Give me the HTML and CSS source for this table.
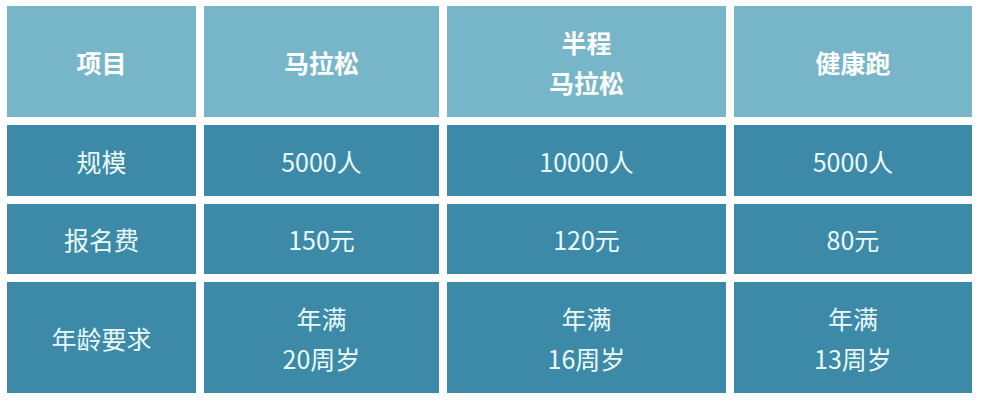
FILE: index.html
```html
<!DOCTYPE html>
<html lang="zh-CN">
<head>
<meta charset="utf-8">
<link rel="stylesheet" href="styles.css">
</head>
<body>
<div class="table">
  <div class="cell head">项目</div>
  <div class="cell head">马拉松</div>
  <div class="cell head">半程<br>马拉松</div>
  <div class="cell head">健康跑</div>

  <div class="cell">规模</div>
  <div class="cell">5000人</div>
  <div class="cell">10000人</div>
  <div class="cell">5000人</div>

  <div class="cell">报名费</div>
  <div class="cell">150元</div>
  <div class="cell">120元</div>
  <div class="cell">80元</div>

  <div class="cell">年龄要求</div>
  <div class="cell">年满<br>20周岁</div>
  <div class="cell">年满<br>16周岁</div>
  <div class="cell">年满<br>13周岁</div>
</div>
</body>
</html>
```

FILE: styles.css
```css
html, body {
  margin: 0;
  padding: 0;
  background: #ffffff;
}
.table {
  display: grid;
  grid-template-columns: 189px 235px 279px 238px;
  grid-template-rows: 111px 71px 70px 111px;
  gap: 8px;
  padding: 6px 0 0 7px;
  font-family: "Noto Sans CJK SC", "Noto Sans", sans-serif;
}
.cell {
  display: flex;
  align-items: center;
  justify-content: center;
  text-align: center;
  background: #3d89a8;
  color: #eafafa;
  font-size: 25px;
  line-height: 40px;
}
.cell.head {
  background: #77b6c9;
  color: #ffffff;
  font-weight: 700;
  font-size: 25px;
}
```
